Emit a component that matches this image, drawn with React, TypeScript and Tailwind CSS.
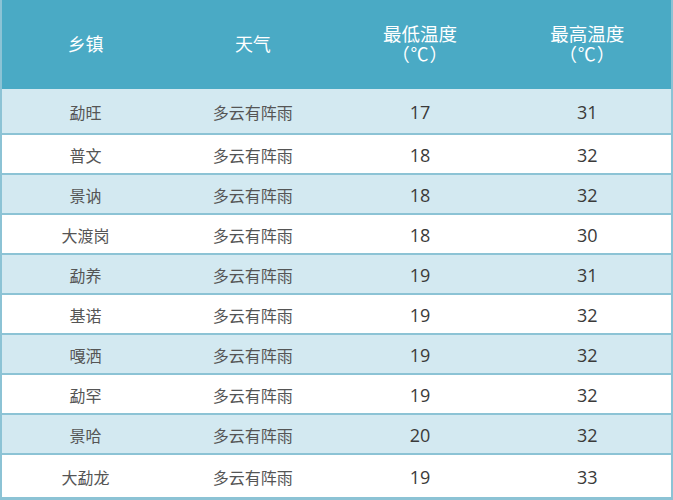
const rows = [
  { town: "勐旺", low: 17, high: 31 },
  { town: "普文", low: 18, high: 32 },
  { town: "景讷", low: 18, high: 32 },
  { town: "大渡岗", low: 18, high: 30 },
  { town: "勐养", low: 19, high: 31 },
  { town: "基诺", low: 19, high: 32 },
  { town: "嘎洒", low: 19, high: 32 },
  { town: "勐罕", low: 19, high: 32 },
  { town: "景哈", low: 20, high: 32 },
  { town: "大勐龙", low: 19, high: 33 },
]

const cjk = "font-['Noto_Sans_CJK_SC',sans-serif]"
const num = "font-['Open_Sans','Noto_Sans_CJK_SC',sans-serif]"

export default function App() {
  return (
    <div className="w-[673px] h-[500px] bg-white">
      <div className="flex h-full flex-col border-x-2 border-b-[3px] border-[#8cc3d5]">
        <div className={`grid h-[89px] shrink-0 grid-cols-4 items-center bg-[#4aaac5] pb-[3px] text-[18px] text-white ${cjk}`}>
          <div className="text-center">乡镇</div>
          <div className="text-center">天气</div>
          <div className="flex flex-col items-center">
            <span className="text-[18.5px] leading-[20px]">最低温度</span>
            <span className="leading-[20px] tracking-[1px]">（℃）</span>
          </div>
          <div className="flex flex-col items-center">
            <span className="text-[18.5px] leading-[20px]">最高温度</span>
            <span className="leading-[20px] tracking-[1px]">（℃）</span>
          </div>
        </div>
        {rows.map((r, i) => {
          const first = i === 0
          const last = i === rows.length - 1
          return (
            <div
              key={r.town}
              className={`grid grid-cols-4 items-center pt-[2px] ${first ? "h-[46px]" : last ? "flex-1" : "h-[40px]"} ${
                last ? "" : "border-b-2 border-[#8cc3d5]"
              } ${i % 2 === 0 ? "bg-[#d3e9f1]" : "bg-white"}`}
            >
              <div className={`text-center text-[16px] text-[#555] ${cjk}`}>{r.town}</div>
              <div className={`text-center text-[16px] text-[#555] ${cjk}`}>多云有阵雨</div>
              <div className={`text-center text-[18px] text-[#3a3a3a] ${num}`}>{r.low}</div>
              <div className={`text-center text-[18px] text-[#3a3a3a] ${num}`}>{r.high}</div>
            </div>
          )
        })}
      </div>
    </div>
  )
}
